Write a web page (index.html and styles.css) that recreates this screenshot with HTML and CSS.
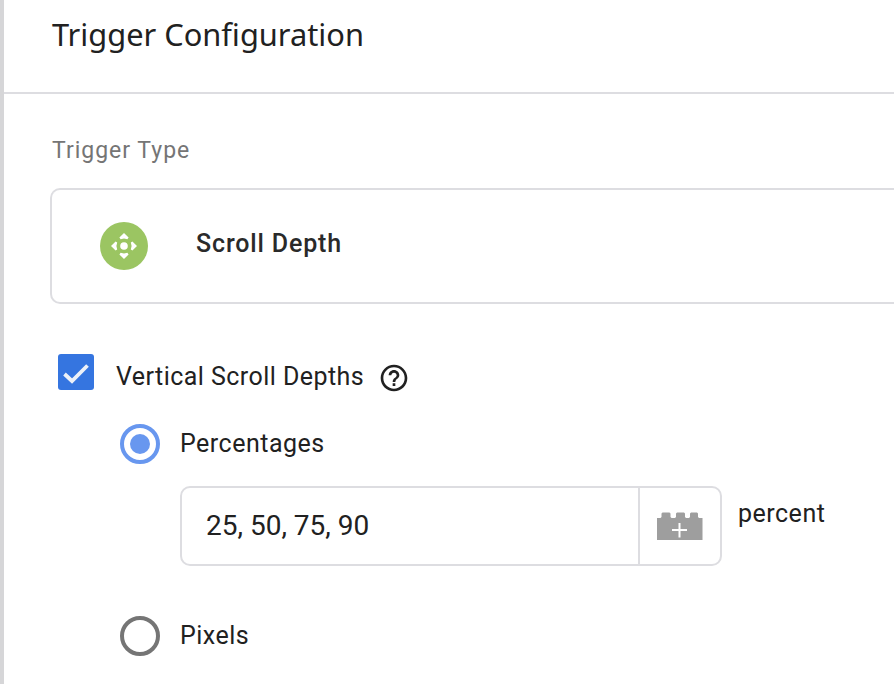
FILE: index.html
```html
<!DOCTYPE html>
<html lang="en">
<head>
<meta charset="utf-8">
<title>Trigger Configuration</title>
<link rel="stylesheet" href="styles.css">
</head>
<body>
<main class="panel">
  <header class="header"><h1 class="title">Trigger Configuration</h1></header>
  <section class="content">
    <div class="type-label">Trigger Type</div>
    <div class="type-card">
      <svg class="type-icon" width="48" height="48" viewBox="0 0 48 48" aria-hidden="true">
        <circle cx="24" cy="24" r="24" fill="#9bc562"/>
        <circle cx="24" cy="24" r="3.800" fill="#fff"/>
        <path d="M24 11l4.600 4.600-1.200 1.600-3.400-.8-3.400.8-1.200-1.600zM24 37l-4.600-4.600 1.200-1.600 3.400.8 3.400-.8 1.200 1.600zM11 24l4.600-4.600 1.600 1.200-.8 3.400.8 3.400-1.600 1.200zM37 24l-4.600 4.600-1.600-1.200.8-3.400-.8-3.400 1.600-1.200z" fill="#fff"/>
      </svg>
      <span class="type-name">Scroll Depth</span>
    </div>
    <div class="check-row">
      <span class="checkbox">
        <svg width="36" height="36" viewBox="0 0 36 36" aria-hidden="true"><path d="M6.500 20l7.500 7L29.500 11.500" fill="none" stroke="#edf1f8" stroke-width="3.800"/></svg>
      </span>
      <span class="check-label">Vertical Scroll Depths</span>
      <svg class="help" width="32" height="32" viewBox="0 0 24 24" aria-hidden="true"><path fill="#212121" d="M11 18h2v-2h-2v2zm1-16C6.480 2 2 6.480 2 12s4.480 10 10 10 10-4.480 10-10S17.520 2 12 2zm0 18c-4.410 0-8-3.590-8-8s3.590-8 8-8 8 3.590 8 8-3.590 8-8 8zm0-14c-2.210 0-4 1.790-4 4h2c0-1.100.9-2 2-2s2 .9 2 2c0 2-3 1.750-3 5h2c0-2.250 3-2.500 3-5 0-2.210-1.790-4-4-4z"/></svg>
    </div>
    <div class="options">
      <div class="radio-row">
        <span class="radio radio-on"><span class="radio-dot"></span></span>
        <span class="radio-label">Percentages</span>
      </div>
      <div class="field-row">
        <div class="field">
          <span class="field-value">25, 50, 75, 90</span>
          <span class="field-btn">
            <svg width="46" height="28" viewBox="0 0 46 28" aria-hidden="true"><path fill="#9e9e9e" d="M0 6h3.500l1-1V1.500L5.500 0.500h7l1 1V5l1 1h3.500l1-1V1.500l1-1h7l1 1V5l1 1h3l1-1V1.500l1-1h6l1 1V5l1 1h3.500v22H0z"/><path fill="#fff" d="M21.500 11h2v6h6.500v2h-6.500v6.500h-2V19h-6.500v-2h6.500z"/></svg>
          </span>
        </div>
        <span class="unit">percent</span>
      </div>
      <div class="radio-row radio-row-last">
        <span class="radio"></span>
        <span class="radio-label">Pixels</span>
      </div>
    </div>
  </section>
</main>
</body>
</html>
```
FILE: styles.css
```css
html, body {
  margin: 0;
  padding: 0;
  height: 100%;
  overflow: hidden;
  background: #fff;
}
.panel {
  height: 684px;
  border-left: 4px solid #d6d6d8;
  font-family: Roboto, "Liberation Sans", sans-serif;
  color: #212121;
  box-sizing: border-box;
  overflow: hidden;
}
.header {
  height: 92px;
  border-bottom: 2px solid #dddde1;
  padding-left: 48px;
}
.title {
  margin: 0;
  padding-top: 12px;
  font-family: "Noto Sans", Roboto, sans-serif;
  font-size: 30.800px;
  line-height: 44px;
  font-weight: 400;
  color: #212121;
}
.content {
  padding: 43px 0 0 46px;
}
.type-label {
  font-size: 23px;
  line-height: 28px;
  letter-spacing: 1px;
  color: #757575;
  padding-left: 2px;
}
.type-card {
  display: flex;
  align-items: center;
  height: 116px;
  margin-top: 23px;
  box-sizing: border-box;
  border: 2px solid #dddde1;
  border-right: 0;
  border-radius: 10px 0 0 10px;
  padding-left: 48px;
}
.type-icon { flex: none; }
.type-name {
  margin-left: 48px;
  padding-bottom: 6px;
  font-size: 25px;
  font-weight: 500;
  letter-spacing: 0.85px;
  color: #2a2a2a;
}
.check-row {
  display: flex;
  align-items: center;
  margin-top: 50px;
  padding-left: 8px;
  height: 36px;
}
.checkbox {
  width: 36px;
  height: 36px;
  background: #3575e0;
  border-radius: 3px;
  flex: none;
  display: flex;
}
.check-label {
  margin-left: 22px;
  padding-top: 8px;
  font-size: 25px;
  letter-spacing: 0.45px;
}
.help { margin-left: 14px; margin-top: 12px; }
.options { padding-left: 70px; }
.radio-row {
  display: flex;
  align-items: center;
  margin-top: 34px;
  height: 40px;
}
.radio-row-last { margin-top: 50px; }
.radio {
  width: 40px;
  height: 40px;
  box-sizing: border-box;
  border: 4px solid #757575;
  border-radius: 50%;
  display: flex;
  align-items: center;
  justify-content: center;
  flex: none;
}
.radio-on { border-color: #6897ef; }
.radio-dot {
  width: 20px;
  height: 20px;
  border-radius: 50%;
  background: #6897ef;
}
.radio-label {
  margin-left: 20px;
  padding-bottom: 2px;
  font-size: 25px;
  letter-spacing: 0.5px;
}
.field-row {
  display: flex;
  align-items: flex-start;
  margin-top: 22px;
  padding-left: 60px;
}
.field {
  display: flex;
  width: 542px;
  height: 80px;
  box-sizing: border-box;
  border: 2px solid #dddde1;
  border-radius: 10px;
}
.field-value {
  flex: 1;
  padding-left: 24px;
  font-size: 28px;
  line-height: 76px;
}
.field-btn {
  width: 80px;
  border-left: 2px solid #dddde1;
  display: flex;
  align-items: center;
  justify-content: center;
}
.unit {
  margin-left: 16px;
  font-size: 25px;
  line-height: 56px;
  letter-spacing: 0.5px;
}
```
